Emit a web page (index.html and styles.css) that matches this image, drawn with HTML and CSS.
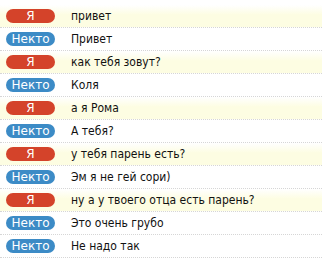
FILE: index.html
```html
<!DOCTYPE html>
<html lang="ru">
<head>
    <meta charset="UTF-8">
    <title>Чат</title>
    <link rel="stylesheet" href="styles.css">
</head>
<body>

<div class="log">
    <div class="msg me"><span class="who">Я</span><span class="text">привет</span></div>
    <div class="msg"><span class="who">Некто</span><span class="text">Привет</span></div>
    <div class="msg me"><span class="who">Я</span><span class="text">как тебя зовут?</span></div>
    <div class="msg"><span class="who">Некто</span><span class="text">Коля</span></div>
    <div class="msg me"><span class="who">Я</span><span class="text">а я Рома</span></div>
    <div class="msg"><span class="who">Некто</span><span class="text">А тебя?</span></div>
    <div class="msg me"><span class="who">Я</span><span class="text">у тебя парень есть?</span></div>
    <div class="msg"><span class="who">Некто</span><span class="text">Эм я не гей сори)</span></div>
    <div class="msg me"><span class="who">Я</span><span class="text">ну а у твоего отца есть парень?</span></div>
    <div class="msg"><span class="who">Некто</span><span class="text">Это очень грубо</span></div>
    <div class="msg"><span class="who">Некто</span><span class="text">Не надо так</span></div>
</div>

</body>
</html>
```

FILE: styles.css
```css
body {
    margin: 0;
    padding: 5px 0 0;
    background: #fff;
    font-family: "DejaVu Sans Condensed", "DejaVu Sans", Verdana, sans-serif;
    font-size: 12px;
    color: #111;
}
.log {
    width: 100%;
}
.msg {
    display: flex;
    align-items: center;
    height: 22px;
    border-bottom: 1px dotted #d6d6d6;
}
.msg.me {
    background: linear-gradient(#ffffff, #fdfde2 45%, #fdfde2);
}
.who {
    flex: none;
    width: 49px;
    height: 14px;
    line-height: 14px;
    margin-left: 6px;
    margin-right: 16px;
    border-radius: 7px;
    background-color: #3c8bc6;
    color: #fff;
    text-align: center;
    font-family: "DejaVu Sans", Verdana, sans-serif;
    font-size: 12px;
}
.me .who {
    background-color: #d4432a;
}
.text {
    white-space: nowrap;
}
```
